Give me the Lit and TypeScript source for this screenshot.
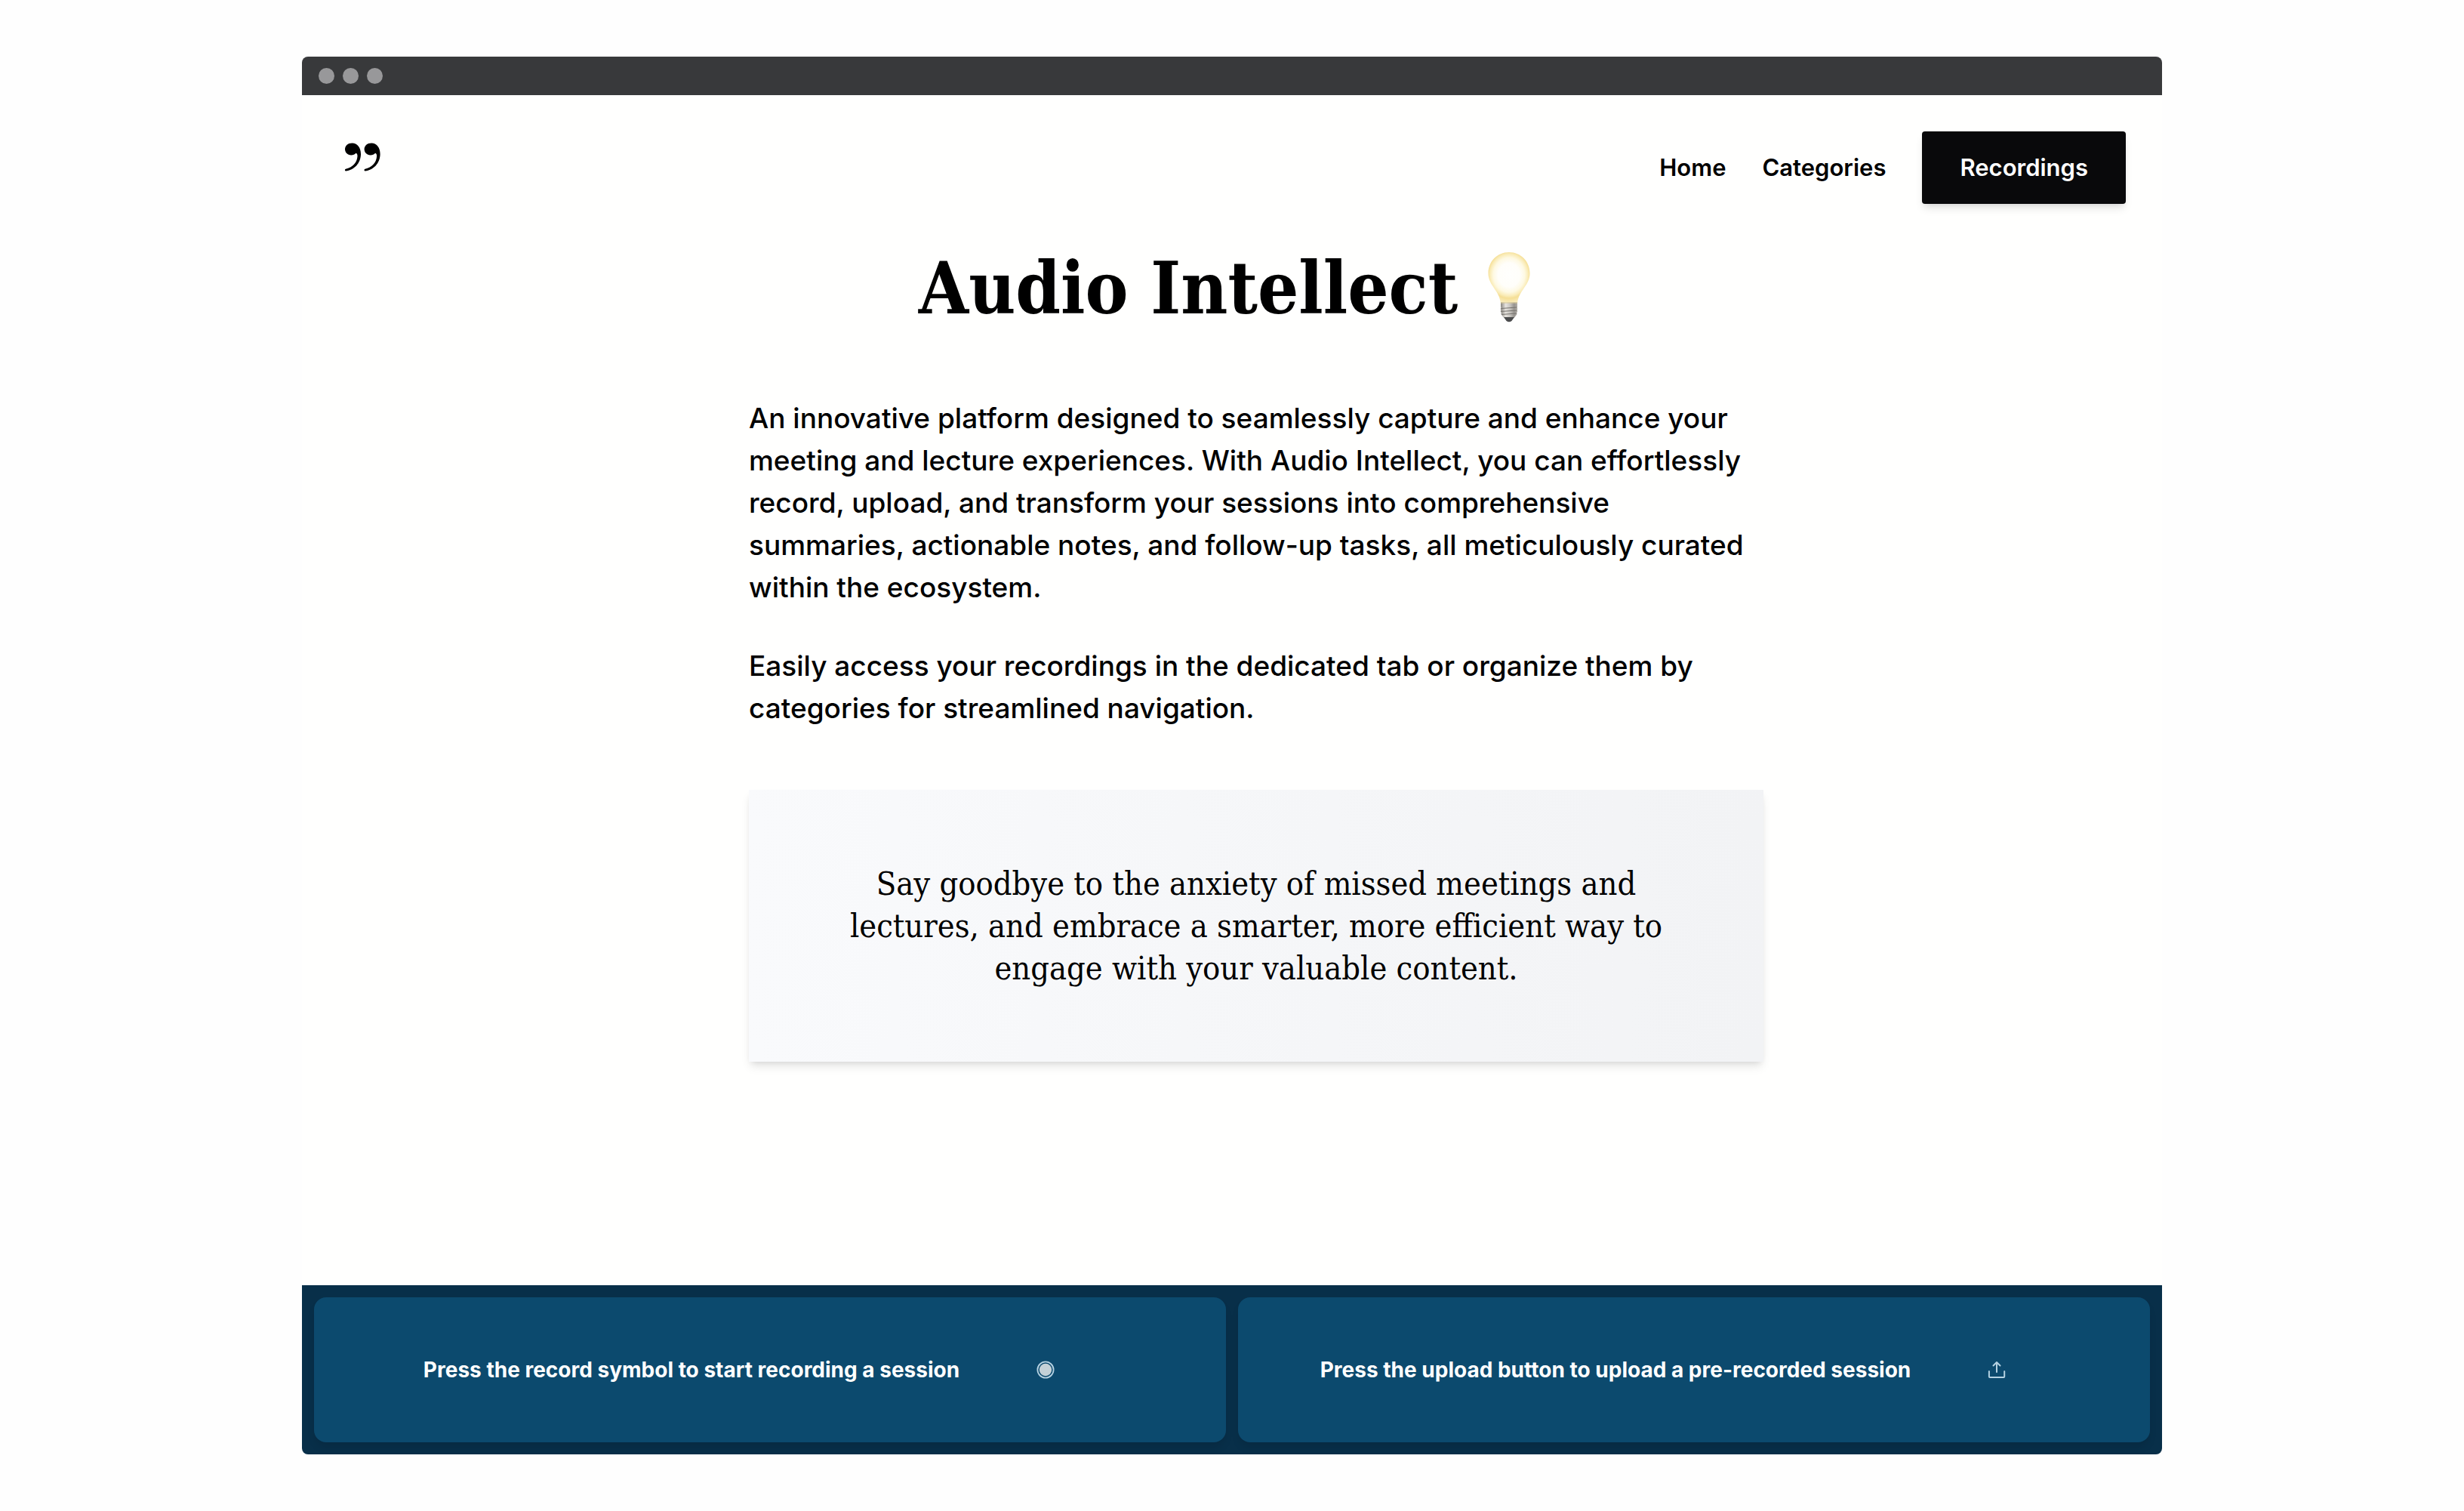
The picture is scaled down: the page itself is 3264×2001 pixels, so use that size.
import { LitElement, html, css } from "lit";
import { customElement } from "lit/decorators.js";

@customElement("quote-logo")
export class QuoteLogo extends LitElement {
  static styles = css`
    :host {
      display: block;
      width: 64px;
      height: 64px;
    }
    .mark {
      display: block;
      width: 100%;
      height: 100%;
      fill: #000;
    }
  `;

  render() {
    return html`
      <svg class="mark" viewBox="0 0 64 64" aria-hidden="true">
        <path
          d="M18.500 15.500C25 15.500 30 21 30 30C30 42 21 51.500 10 52.500C8.500 52.600 8.500 50.200 10 49.800C19 47.500 25 41.500 25.500 33C25.600 30.500 24.800 29 23.400 28.700C22 30.400 19.800 31.500 17.200 31.500C12.300 31.500 9 28 9 23.600C9 19 13 15.500 18.500 15.500Z"
        />
        <path
          d="M44.100 15.500C50.600 15.500 55.600 21 55.600 30C55.600 42 46.600 51.500 35.600 52.500C34.100 52.600 34.100 50.200 35.600 49.800C44.600 47.500 50.600 41.500 51.100 33C51.200 30.500 50.400 29 49 28.700C47.600 30.400 45.400 31.500 42.800 31.500C37.900 31.500 34.600 28 34.600 23.600C34.600 19 38.600 15.500 44.100 15.500Z"
        />
      </svg>
    `;
  }
}

@customElement("light-bulb")
export class LightBulb extends LitElement {
  static styles = css`
    :host {
      display: block;
      width: 96px;
      height: 96px;
    }
    .bulb {
      display: block;
      width: 100%;
      height: 100%;
    }
  `;

  render() {
    return html`
      <svg class="bulb" viewBox="0 2 96 96" role="img" aria-label="Light bulb">
        <defs>
          <radialGradient id="glass" gradientUnits="userSpaceOnUse" cx="48" cy="32" r="40" gradientTransform="translate(0 -3) scale(1 1.1)">
            <stop offset="0" stop-color="#fffffd" />
            <stop offset="0.36" stop-color="#fffefa" />
            <stop offset="0.52" stop-color="#fef9e2" />
            <stop offset="0.63" stop-color="#faecb8" />
            <stop offset="0.7" stop-color="#f5df96" />
            <stop offset="0.85" stop-color="#faedbd" />
            <stop offset="1" stop-color="#f5e3a4" />
          </radialGradient>
          <linearGradient id="metal" x1="0" x2="1" y1="0" y2="0">
            <stop offset="0" stop-color="#85827c" />
            <stop offset="0.3" stop-color="#e6e3de" />
            <stop offset="0.55" stop-color="#c9c6c1" />
            <stop offset="0.8" stop-color="#96938e" />
            <stop offset="1" stop-color="#b5b1aa" />
          </linearGradient>
        </defs>
        <path
          d="M48 2C63.5 2 75.5 14 75.5 30C75.5 46 60.5 53 59.2 69H36.8C35.5 53 20.5 46 20.5 30C20.5 14 32.5 2 48 2Z"
          fill="url(#glass)"
        />
        <path
          d="M37 68.500H59V74L58.600 75.500Q60 77 58.600 78.500Q60 80.500 58.200 82Q59.200 84 57.500 85.500L55 88.500H41L38.500 85.500Q36.800 84 37.800 82Q36 80.500 37.400 78.500Q36 77 37.400 75.500L37 74Z"
          fill="url(#metal)"
        />
        <path d="M37 69H59" stroke="#d8c893" stroke-width="1" />
        <path
          d="M37.500 76.500L58.500 75M37.500 80.500L58.500 79M38 84.500L58 83"
          stroke="#77746f"
          stroke-width="1"
          fill="none"
        />
        <path d="M41 88H55L51.500 93Q48 95.500 44.500 93Z" fill="#4b4c4d" />
      </svg>
    `;
  }
}

@customElement("session-action")
export class SessionAction extends LitElement {
  static properties = {
    text: { type: String },
    kind: { type: String },
  };

  declare text: string;
  declare kind: string;

  static styles = css`
    :host {
      display: flex;
      flex: 1;
      align-items: center;
      justify-content: center;
      gap: 20px;
      height: 192px;
      border-radius: 16px;
      background: #0c4a6e;
      box-shadow: 0 8px 12px -2px rgba(0, 0, 0, 0.1);
    }
    .text {
      margin: 0;
      color: #fff;
      font-size: 28px;
      line-height: 40px;
      font-weight: 700;
    }
    .trigger {
      display: flex;
      margin: 0;
      padding: 20px 82px;
      border: 0;
      background: none;
      color: #b4d1e1;
      cursor: pointer;
    }
    .icon {
      display: block;
      width: 24px;
      height: 24px;
    }
  `;

  private recordIcon() {
    return html`
      <svg class="icon" viewBox="0 0 24 24" fill="none" aria-hidden="true">
        <circle cx="12" cy="12" r="10.6" stroke="currentColor" stroke-width="1.8" />
        <circle cx="12" cy="12" r="8.2" fill="#c4d1d7" />
      </svg>
    `;
  }

  private uploadIcon() {
    return html`
      <svg class="icon" viewBox="0 0 24 24" fill="none" stroke="currentColor" stroke-width="2" stroke-linecap="round" stroke-linejoin="round" aria-hidden="true">
        <path d="M12 15V2.200M7.500 6.500L12 2L16.500 6.500" />
        <path d="M1.900 14V21Q1.900 22 2.900 22H21.200Q22.200 22 22.200 21V14" />
      </svg>
    `;
  }

  render() {
    return html`
      <p class="text" id="label">${this.text}</p>
      <button class="trigger" type="button" aria-labelledby="label">
        ${this.kind === "record" ? this.recordIcon() : this.uploadIcon()}
      </button>
    `;
  }
}

@customElement("app-root")
export class AppRoot extends LitElement {
  static styles = css`
    :host {
      display: flex;
      box-sizing: border-box;
      min-height: 100vh;
      padding: 75px 400px;
      background: #fefefe;
      color: #000;
      font-family: Inter, "Liberation Sans", sans-serif;
    }
    .window {
      display: flex;
      flex: 1;
      flex-direction: column;
      overflow: hidden;
      border-radius: 8px;
      background: #fffffe;
    }
    .titlebar {
      display: flex;
      align-items: center;
      gap: 11px;
      height: 51px;
      padding: 0 22px;
      background: #38393b;
    }
    .dot {
      width: 21px;
      height: 21px;
      border-radius: 50%;
      background: #98989a;
    }
    .header {
      display: flex;
      align-items: flex-start;
      justify-content: space-between;
      padding: 48px 48px 0;
    }
    .nav {
      display: flex;
      align-items: center;
      gap: 48px;
    }
    .link {
      color: #000;
      font-size: 31px;
      line-height: 48px;
      font-weight: 600;
      text-decoration: none;
    }
    .primary {
      padding: 24px 50px;
      border-radius: 4px;
      background: #09090b;
      color: #fff;
      box-shadow: 0 8px 12px -2px rgba(0, 0, 0, 0.1), 0 4px 8px -4px rgba(0, 0, 0, 0.1);
    }
    .main {
      display: flex;
      flex: 1;
      flex-direction: column;
      align-items: center;
      padding-top: 48px;
    }
    .title {
      display: flex;
      align-items: center;
      gap: 20px;
      margin: 0;
      font-family: "DejaVu Serif Condensed", "DejaVu Serif", serif;
      font-size: 95px;
      line-height: 128px;
      font-weight: 700;
    }
    .content {
      box-sizing: content-box;
      width: 100%;
      max-width: 1344px;
      padding: 80px 0 0 64px;
    }
    .paragraph {
      margin: 0 0 48px;
      font-size: 37px;
      line-height: 56px;
      font-weight: 500;
    }
    .quote {
      margin: 80px 0 0;
      padding: 96px;
      background: linear-gradient(to right, #f9fafc, #f2f3f5);
      box-shadow: 0 8px 12px -2px rgba(0, 0, 0, 0.1), 0 4px 8px -4px rgba(0, 0, 0, 0.1);
      font-family: "DejaVu Serif Condensed", "DejaVu Serif", serif;
      font-size: 43px;
      line-height: 56px;
      text-align: center;
    }
    .footer {
      display: flex;
      gap: 16px;
      padding: 16px;
      background: #082f49;
    }
  `;

  render() {
    return html`
      <div class="window">
        <div class="titlebar">
          <span class="dot"></span>
          <span class="dot"></span>
          <span class="dot"></span>
        </div>
        <header class="header">
          <quote-logo></quote-logo>
          <nav class="nav">
            <a class="link" href="#home">Home</a>
            <a class="link" href="#categories">Categories</a>
            <a class="link primary" href="#recordings">Recordings</a>
          </nav>
        </header>
        <main class="main">
          <h1 class="title">Audio Intellect <light-bulb></light-bulb></h1>
          <div class="content">
            <p class="paragraph">
              An innovative platform designed to seamlessly capture and enhance your meeting and
              lecture experiences. With Audio Intellect, you can effortlessly record, upload, and
              transform your sessions into comprehensive summaries, actionable notes, and follow-up
              tasks, all meticulously curated within the ecosystem.
            </p>
            <p class="paragraph">
              Easily access your recordings in the dedicated tab or organize them by categories for
              streamlined navigation.
            </p>
            <blockquote class="quote">
              Say goodbye to the anxiety of missed meetings and lectures, and embrace a smarter,
              more efficient way to engage with your valuable content.
            </blockquote>
          </div>
        </main>
        <footer class="footer">
          <session-action
            kind="record"
            text="Press the record symbol to start recording a session"
          ></session-action>
          <session-action
            kind="upload"
            text="Press the upload button to upload a pre-recorded session"
          ></session-action>
        </footer>
      </div>
    `;
  }
}
